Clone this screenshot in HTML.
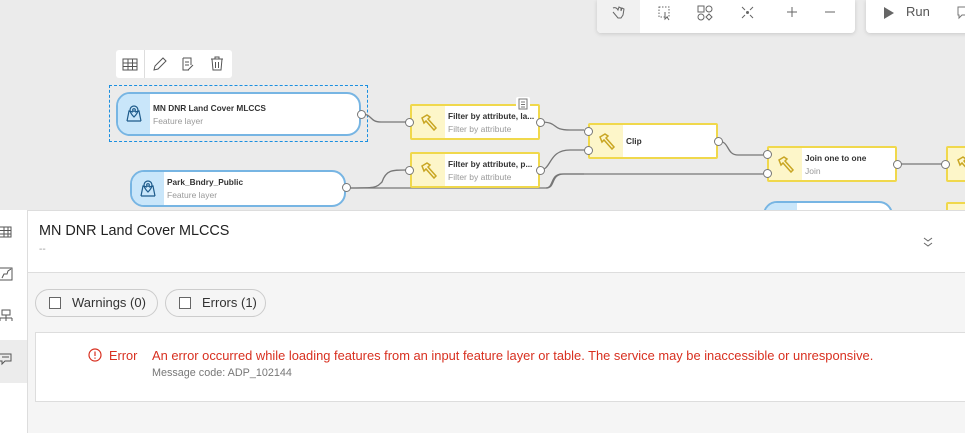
<!DOCTYPE html>
<html><head><meta charset="utf-8"><style>
*{box-sizing:border-box;margin:0;padding:0}
body{width:965px;height:433px;overflow:hidden;background:#ebebeb;font-family:"Liberation Sans",sans-serif;position:relative}
.a{position:absolute}
.tb{background:#fff;box-shadow:0 1px 4px rgba(0,0,0,.15);border-radius:0 0 4px 4px}
.node{position:absolute;background:#fff;display:flex;overflow:hidden}
.lay{border:2px solid #77b5e3;border-radius:14px}
.lay .ic{width:32px;background:#c9e6fa;display:flex;align-items:center;justify-content:center}
.tool{border:2px solid #f0d84c;border-radius:2px}
.tool .ic{width:33px;background:#fdf6c9;display:flex;align-items:center;justify-content:center}
.tx{padding-left:3px;display:flex;flex-direction:column;justify-content:center;white-space:nowrap}
.t1{font-size:8.3px;font-weight:bold;color:#333}
.t2{font-size:8.5px;color:#999;margin-top:3px}
.port{position:absolute;width:9px;height:9px;border-radius:50%;background:#fff;border:1.3px solid #777}
</style></head><body>
<div class="a tb" style="left:597px;top:0;width:258px;height:33px">
 <div class="a" style="left:0;top:0;width:43px;height:33px;background:#f1f1f1;border-radius:0 0 0 4px"></div>
 <svg class="a" style="left:0;top:0" width="258" height="33" fill="none" stroke="#666" stroke-width="1">
  <path d="M16 8c2-1 4 0 5 2l1-3 2 1 0 3 1-3 2 1-1 6-2 3h-3l-5-6"/>
  <rect x="62" y="7" width="10" height="10" stroke-dasharray="1.5 1.5"/><path d="M68 12l0 7 2-2 2 3" />
  <rect x="101" y="6" width="6" height="6"/><circle cx="112" cy="9" r="3"/><circle cx="104" cy="17" r="3"/><path d="M112 14l3 3-3 3-3-3z"/>
  <path d="M145 7l3 3M156 7l-3 3M145 18l3-3M156 18l-3-3"/><circle cx="150.5" cy="12.5" r="1" fill="#666"/>
  <path d="M190 12h10M195 7v10M228 12h10"/>
 </svg>
</div>
<div class="a tb" style="left:866px;top:0;width:110px;height:33px">
 <svg class="a" style="left:17px;top:6px" width="12" height="14"><path d="M1 1l10 6-10 6z" fill="#666"/></svg>
 <div class="a" style="left:40px;top:4px;font-size:13px;color:#555">Run</div>
 <svg class="a" style="left:91px;top:6px" width="12" height="14" fill="none" stroke="#777"><path d="M1 1h10v8H5l-3 3V9H1z"/></svg>
</div>
<div class="a" style="left:116px;top:50px;width:116px;height:28px;background:#fff;border-radius:3px">
 <div class="a" style="left:28px;top:0;width:1px;height:28px;background:#ddd"></div>
 <svg class="a" style="left:0;top:0" width="116" height="28" fill="none" stroke="#555" stroke-width="1">
  <rect x="7" y="9" width="14" height="11"/><path d="M7 13h14M7 16.5h14M12 9v11M16.5 9v11"/>
  <path d="M38 20l1-4 8-8 3 3-8 8z"/>
  <path d="M67 8h8v7M67 8v12h6M69 12h4M69 15h4M72 20l5-5"/>
  <path d="M95 9h12M99 9V7h4v2M96 9l1 11h8l1-11M99.5 12v6M102.5 12v6"/>
 </svg>
</div>
<div class="a" style="left:109px;top:85px;width:259px;height:57px;border:1px dashed #1a8fe0"></div>
<svg class="a" style="left:0;top:0" width="965" height="215" fill="none" stroke="#777" stroke-width="1.3">
 <path d="M361 114c12 0 8 8 20 8h25"/>
 <path d="M540 122c20 0 10 8 30 8h14"/>
 <path d="M346 188c30 0 30 0 36 -6c4-12 10-12 24-12"/>
 <path d="M346 188h200c10 0 4-14 18-14h20"/>
 <path d="M540 170c12 0 8-20 30-20h14"/>
 <path d="M718 141c12 0 8 14 20 14h25"/>
 <path d="M546 188c8 0 4-14 16-14h201"/>
 <path d="M897 164h45"/>
</svg>
<div class="node lay" style="left:116px;top:92px;width:245px;height:44px">
 <div class="ic"><svg width="18" height="18" fill="none" stroke="#1d5a8a" stroke-width="1.2"><path d="M2 16l2-10 4 1M16 16l-2-10-4 1M2 16h14"/><path d="M9 12c-3-3-4-5-4-7a4 4 0 0 1 8 0c0 2-1 4-4 7z"/><circle cx="9" cy="5" r="1.3"/></svg></div>
 <div class="tx"><div class="t1">MN DNR Land Cover MLCCS</div><div class="t2">Feature layer</div></div>
</div>
<div class="node lay" style="left:130px;top:170px;width:216px;height:37px">
 <div class="ic"><svg width="18" height="18" fill="none" stroke="#1d5a8a" stroke-width="1.2"><path d="M2 16l2-10 4 1M16 16l-2-10-4 1M2 16h14"/><path d="M9 12c-3-3-4-5-4-7a4 4 0 0 1 8 0c0 2-1 4-4 7z"/><circle cx="9" cy="5" r="1.3"/></svg></div>
 <div class="tx"><div class="t1">Park_Bndry_Public</div><div class="t2">Feature layer</div></div>
</div>
<div class="node lay" style="left:763px;top:201px;width:130px;height:30px"><div class="ic"></div></div>
<div class="node tool" style="left:410px;top:104px;width:130px;height:36px"><div class="ic"><svg width="20" height="18" fill="none" stroke="#c9a623" stroke-width="1.5"><path d="M3 5l5-3 3 2-2 2 8 9-2 2-8-9-2 2z"/></svg></div><div class="tx"><div class="t1">Filter by attribute, la...</div><div class="t2">Filter by attribute</div></div></div>
<div class="node tool" style="left:410px;top:152px;width:130px;height:36px"><div class="ic"><svg width="20" height="18" fill="none" stroke="#c9a623" stroke-width="1.5"><path d="M3 5l5-3 3 2-2 2 8 9-2 2-8-9-2 2z"/></svg></div><div class="tx"><div class="t1">Filter by attribute, p...</div><div class="t2">Filter by attribute</div></div></div>
<div class="node tool" style="left:588px;top:123px;width:130px;height:36px"><div class="ic"><svg width="20" height="18" fill="none" stroke="#c9a623" stroke-width="1.5"><path d="M3 5l5-3 3 2-2 2 8 9-2 2-8-9-2 2z"/></svg></div><div class="tx"><div class="t1">Clip</div></div></div>
<div class="node tool" style="left:767px;top:146px;width:130px;height:36px"><div class="ic"><svg width="20" height="18" fill="none" stroke="#c9a623" stroke-width="1.5"><path d="M3 5l5-3 3 2-2 2 8 9-2 2-8-9-2 2z"/></svg></div><div class="tx"><div class="t1">Join one to one</div><div class="t2">Join</div></div></div>
<div class="node tool" style="left:946px;top:146px;width:40px;height:36px"><div class="ic"><svg width="20" height="18" fill="none" stroke="#c9a623" stroke-width="1.5"><path d="M3 5l5-3 3 2-2 2 8 9-2 2-8-9-2 2z"/></svg></div></div>
<div class="node tool" style="left:946px;top:202px;width:40px;height:30px"><div class="ic"></div></div>
<div class="a" style="left:516px;top:97px;width:14px;height:14px;background:#fff;border-radius:2px"><svg width="14" height="14" fill="none" stroke="#777"><path d="M3 2h8v10H3zM5 5h4M5 7.5h4M5 10h4"/></svg></div>
<div class="port" style="left:357px;top:110px"></div>
<div class="port" style="left:405px;top:118px"></div>
<div class="port" style="left:536px;top:118px"></div>
<div class="port" style="left:405px;top:166px"></div>
<div class="port" style="left:536px;top:166px"></div>
<div class="port" style="left:342px;top:183px"></div>
<div class="port" style="left:584px;top:127px"></div>
<div class="port" style="left:584px;top:146px"></div>
<div class="port" style="left:714px;top:137px"></div>
<div class="port" style="left:763px;top:150px"></div>
<div class="port" style="left:763px;top:169px"></div>
<div class="port" style="left:893px;top:160px"></div>
<div class="port" style="left:941px;top:160px"></div>
<div class="a" style="left:0;top:210px;width:965px;height:223px;background:#f5f5f5;border-top:1px solid #ddd"></div>
<div class="a" style="left:0;top:210px;width:28px;height:223px;background:#fff;border-right:1px solid #ddd">
 <div class="a" style="left:0;top:130px;width:27px;height:43px;background:#ececec"></div>
 <svg class="a" style="left:0;top:0" width="27" height="223" fill="none" stroke="#555" stroke-width="1">
  <path d="M-1 17h12v10H-1M-1 20.5h12M-1 24h12M4 17v10M8 17v10"/>
  <path d="M0 58h12v12H0M2 68l2-4 3 0 1-3 3-2"/>
  <path d="M2 100h8v5H2zM6 105v3M0 108h12M0 108v3M6 108v3M12 108v3"/>
  <path d="M0 144h11v7H5l-3 3v-3H0M2 147h7"/>
 </svg>
</div>
<div class="a" style="left:28px;top:211px;width:937px;height:62px;background:#fff;border-bottom:1px solid #ddd">
 <div class="a" style="left:11px;top:12px;font-size:14.4px;color:#222">MN DNR Land Cover MLCCS</div>
 <div class="a" style="left:11px;top:33px;font-size:10px;color:#999">--</div>
 <svg class="a" style="left:894px;top:25px" width="12" height="12" fill="none" stroke="#666"><path d="M2 2l4 3 4-3M2 7l4 3 4-3"/></svg>
</div>
<div class="a" style="left:35px;top:289px;width:123px;height:28px;border:1px solid #ccc;border-radius:14px;background:#f5f5f5">
 <div class="a" style="left:13px;top:7px;width:12px;height:12px;border:1px solid #666;background:#fff"></div>
 <div class="a" style="left:36px;top:5px;font-size:13px;color:#333">Warnings (0)</div>
</div>
<div class="a" style="left:165px;top:289px;width:101px;height:28px;border:1px solid #ccc;border-radius:14px;background:#f5f5f5">
 <div class="a" style="left:13px;top:7px;width:12px;height:12px;border:1px solid #666;background:#fff"></div>
 <div class="a" style="left:36px;top:5px;font-size:13px;color:#333">Errors (1)</div>
</div>
<div class="a" style="left:35px;top:332px;width:940px;height:70px;background:#fff;border:1px solid #ddd">
 <svg class="a" style="left:52px;top:15px" width="14" height="14" fill="none" stroke="#d83020" stroke-width="1.2"><circle cx="7" cy="7" r="6"/><path d="M7 3.5v4.5M7 9.5v1.2"/></svg>
 <div class="a" style="left:73px;top:15px;font-size:12.8px;color:#d83020">Error</div>
 <div class="a" style="left:116px;top:15px;font-size:12.9px;color:#d83020;white-space:nowrap">An error occurred while loading features from an input feature layer or table. The service may be inaccessible or unresponsive.</div>
 <div class="a" style="left:116px;top:34px;font-size:10.8px;color:#777">Message code: ADP_102144</div>
</div>
</body></html>
